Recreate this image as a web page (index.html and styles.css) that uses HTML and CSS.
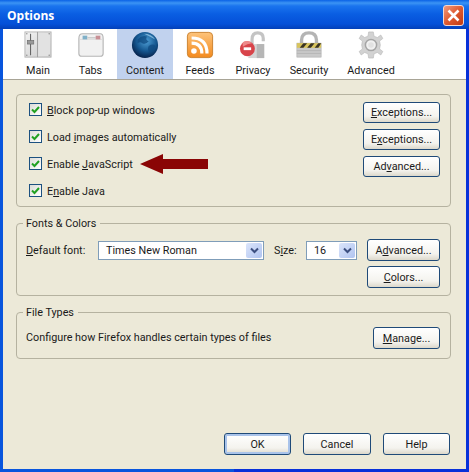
FILE: index.html
```html
<!DOCTYPE html>
<html lang="en">
<head>
<meta charset="utf-8">
<title>Options</title>
<link rel="stylesheet" href="styles.css">
</head>
<body>
<div class="window">
  <header class="titlebar">
    <span class="title">Options</span>
    <span class="close">
      <svg viewBox="0 0 13 13" width="13" height="13"><path d="M1.5 1.5 L11.5 11.5 M11.5 1.5 L1.5 11.5" stroke="#fff" stroke-width="2.6" fill="none"/></svg>
    </span>
  </header>
  <div class="client">
    <nav class="toolbar">
      <div class="tab">
        <svg class="icon" viewBox="0 0 30 30"><defs><linearGradient id="m1" x1="0" x2="1" y1="0" y2="1"><stop offset="0" stop-color="#f4f4f4"/><stop offset="1" stop-color="#c8c8c8"/></linearGradient></defs><rect x="1" y="1" width="28" height="27" fill="url(#m1)" stroke="#b4b4b4"/><rect x="15" y="2" width="13" height="25" fill="#e2e2e2"/><path d="M14.5 1V28" stroke="#9c9c9c"/><path d="M7 3V26" stroke="#666" stroke-width="1.2"/><rect x="3.5" y="10" width="7" height="4" fill="#9a9a9a" stroke="#666" stroke-width=".6"/><g fill="#8f8f8f"><circle cx="3" cy="3" r=".8"/><circle cx="27" cy="3" r=".8"/><circle cx="3" cy="26" r=".8"/><circle cx="27" cy="26" r=".8"/></g></svg>
        <span>Main</span>
      </div>
      <div class="tab">
        <svg class="icon" viewBox="0 0 30 30"><path d="M2 8 Q2 3 6 3 H25 Q28 3 28 8 V24 Q28 27 25 27 H5 Q2 27 2 24Z" fill="#f1f1f1" stroke="#b5b5b5" stroke-width="1.2"/><path d="M3 9H27" stroke="#dcdcdc"/><rect x="6" y="5" width="5" height="4" fill="#7fb0c8"/><rect x="11" y="6.5" width="9" height="1.5" fill="#c9c9c9"/><rect x="20" y="5" width="5" height="4" fill="#c88f95"/></svg>
        <span>Tabs</span>
      </div>
      <div class="tab tab-active">
        <svg class="icon" viewBox="0 0 30 30"><defs><radialGradient id="g1" cx=".55" cy=".35" r=".7"><stop offset="0" stop-color="#4f9fd6"/><stop offset=".55" stop-color="#14568f"/><stop offset="1" stop-color="#04193f"/></radialGradient></defs><circle cx="15" cy="15" r="14" fill="url(#g1)"/><path d="M7 9 Q12 4 17 6 Q15 10 19 11 Q16 15 12 13 Q10 11 7 13Z M19 16 Q24 13 26 16 Q24 22 20 23 Q17 20 19 16Z" fill="#0f4a80" opacity=".75"/><path d="M14 3 Q22 3 26 9 Q20 6 14 3Z" fill="#9fd0ee" opacity=".7"/></svg>
        <span>Content</span>
      </div>
      <div class="tab">
        <svg class="icon" viewBox="0 0 30 30"><defs><linearGradient id="f1" x1="0" x2="0" y1="0" y2="1"><stop offset="0" stop-color="#fdc37a"/><stop offset="1" stop-color="#f38a1e"/></linearGradient></defs><rect x="1.5" y="1.5" width="27" height="27" rx="4" fill="url(#f1)" stroke="#c9802c"/><circle cx="8.5" cy="21.5" r="3" fill="#fff"/><path d="M6 13 Q17 13 17 24 M6 7.5 Q22.5 7.5 22.5 24" fill="none" stroke="#fff" stroke-width="3.4"/></svg>
        <span>Feeds</span>
      </div>
      <div class="tab">
        <svg class="icon" viewBox="0 0 30 30"><path d="M14 15V9 Q14 2 20 2 Q26 2 26 8 V11" fill="none" stroke="#c4c4c4" stroke-width="3.4"/><rect x="10" y="14" width="17" height="15" fill="#d4d4d4"/><rect x="19" y="14" width="8" height="15" fill="#b6b6b6"/><circle cx="9" cy="19" r="8" fill="#d8444a"/><path d="M4 12 Q9 9 14 13 Q9 13 4 17Z" fill="#ee8a8a"/><rect x="5" y="17.5" width="8" height="3" fill="#fff"/></svg>
        <span>Privacy</span>
      </div>
      <div class="tab">
        <svg class="icon" viewBox="0 0 30 30"><path d="M7 14V10 Q7 2 15 2 Q23 2 23 10 V14" fill="none" stroke="#b4b4b4" stroke-width="3.6"/><rect x="2" y="13" width="26" height="15" fill="#c9c9c9" stroke="#aaa" stroke-width=".6"/><rect x="2" y="13" width="26" height="5" fill="#d8c45c"/><path d="M5 18 L9 13 H13 L9 18Z M13 18 L17 13 H21 L17 18Z M21 18 L25 13 H28 L25 18Z" fill="#3a3426"/><path d="M2 21H28 M2 24H28" stroke="#b5b5b5"/></svg>
        <span>Security</span>
      </div>
      <div class="tab">
        <svg class="icon" viewBox="0 0 30 30"><g fill="#d2d2d2" stroke="#b4b4b4" stroke-width=".6"><path d="M12.5 1H17.5L18.2 5.5L21.8 7L25.5 4.3L27.7 8L24.2 10.8L25 15L24.2 19.2L27.7 22L25.5 25.7L21.8 23L18.2 24.5L17.5 29H12.5L11.8 24.5L8.2 23L4.5 25.7L2.3 22L5.8 19.2L5 15L5.8 10.8L2.3 8L4.5 4.3L8.2 7L11.8 5.5Z"/></g><circle cx="15" cy="15" r="6" fill="#f1f1f1" stroke="#a5a5a5" stroke-width="1.6"/><circle cx="15" cy="15" r="3" fill="#e2e2e2"/></svg>
        <span>Advanced</span>
      </div>
    </nav>
    <main class="panel">
      <section class="group group-content">
        <div class="checks">
          <label class="check"><span class="box"><svg viewBox="0 0 13 13" width="13" height="13"><path d="M3 6.5 L5.5 9 L10 4" fill="none" stroke="#21a121" stroke-width="2"/></svg></span><span class="check-text"><u>B</u>lock pop-up windows</span></label>
          <label class="check"><span class="box"><svg viewBox="0 0 13 13" width="13" height="13"><path d="M3 6.5 L5.5 9 L10 4" fill="none" stroke="#21a121" stroke-width="2"/></svg></span><span class="check-text">Load <u>i</u>mages automatically</span></label>
          <label class="check"><span class="box"><svg viewBox="0 0 13 13" width="13" height="13"><path d="M3 6.5 L5.5 9 L10 4" fill="none" stroke="#21a121" stroke-width="2"/></svg></span><span class="check-text">Enable <u>J</u>avaScript</span></label>
          <label class="check"><span class="box"><svg viewBox="0 0 13 13" width="13" height="13"><path d="M3 6.5 L5.5 9 L10 4" fill="none" stroke="#21a121" stroke-width="2"/></svg></span><span class="check-text">E<u>n</u>able Java</span></label>
        </div>
        <div class="btn-col btn-col-content">
          <button class="btn btn-exc"><u>E</u>xceptions...</button>
          <button class="btn btn-exc">E<u>x</u>ceptions...</button>
          <button class="btn btn-exc">Ad<u>v</u>anced...</button>
        </div>
        <svg class="arrow" viewBox="0 0 68 20" width="68" height="20"><path d="M0 10 L23 0 V5 H68 V15 H23 V20Z" fill="#8a0505"/></svg>
      </section>
      <section class="group group-fonts">
        <span class="legend">Fonts &amp; Colors</span>
        <div class="fonts-row">
          <span class="lbl lbl-font"><u>D</u>efault font:</span>
          <span class="select sel-font"><span>Times New Roman</span><span class="drop"><svg viewBox="0 0 9 7" width="9" height="7"><path d="M1 1.5 L4.5 5 L8 1.5" fill="none" stroke="#3c4f80" stroke-width="2"/></svg></span></span>
          <span class="lbl lbl-size">S<u>i</u>ze:</span>
          <span class="select sel-size"><span>16</span><span class="drop"><svg viewBox="0 0 9 7" width="9" height="7"><path d="M1 1.5 L4.5 5 L8 1.5" fill="none" stroke="#3c4f80" stroke-width="2"/></svg></span></span>
          <div class="btn-col btn-col-fonts">
            <button class="btn btn-adv">A<u>d</u>vanced...</button>
            <button class="btn btn-adv"><u>C</u>olors...</button>
          </div>
        </div>
      </section>
      <section class="group group-files">
        <span class="legend">File Types</span>
        <span>Configure how Firefox handles certain types of files</span>
        <button class="btn btn-man"><u>M</u>anage...</button>
      </section>
    </main>
    <footer class="actions">
      <button class="btn btn-foot btn-default">OK</button>
      <button class="btn btn-foot btn-cancel">Cancel</button>
      <button class="btn btn-foot">Help</button>
    </footer>
  </div>
</div>
</body>
</html>
```
FILE: styles.css
```css
* { box-sizing: border-box; }
html, body { margin: 0; padding: 0; }
body {
  width: 469px;
  height: 472px;
  overflow: hidden;
  font-family: Roboto, "Noto Sans", sans-serif;
  font-size: 10.8px;
  color: #1a1a1a;
}
.window {
  width: 469px;
  height: 472px;
  display: flex;
  flex-direction: column;
  background: linear-gradient(90deg, #0855dd 0, #0855dd 50%, #0831d9 50%, #0831d9 100%);
  padding: 0 3px 3px;
}
.titlebar {
  height: 29px;
  margin: 0 -3px;
  padding: 1px 5px 0 7px;
  display: flex;
  align-items: center;
  justify-content: space-between;
  background: linear-gradient(180deg, #0a62e6 0, #3c94f4 3px, #1a74ee 6px, #0a5ee2 14px, #0550d8 24px, #0340b8 29px);
}
.title {
  font-family: "Open Sans", sans-serif;
  font-weight: 700;
  font-size: 12px;
  color: #fff;
}
.close {
  width: 21px;
  height: 21px;
  border: 1px solid #f3d8cf;
  border-radius: 3px;
  display: flex;
  align-items: center;
  justify-content: center;
  background: linear-gradient(135deg, #f09a7e 0, #de5a30 50%, #c23a10 100%);
}
.client {
  flex: 1;
  display: flex;
  flex-direction: column;
  background: #ece9d8;
}
.toolbar {
  height: 51px;
  background: #fff;
  border-bottom: 1px solid #a8a496;
  display: grid;
  grid-template-columns: 52px 53px 56px 54px 52px 60px 64px;
  padding-left: 9px;
}
.tab {
  display: flex;
  flex-direction: column;
  align-items: center;
  padding-top: 2px;
  line-height: 15px;
  white-space: nowrap;
}
.tab-active { background: #c1d2ee; }
.icon { width: 28px; height: 28px; margin-bottom: 4px; flex: none; }
.panel {
  flex: 1;
  padding: 14px 15px 0 13px;
  display: flex;
  flex-direction: column;
  gap: 16px;
}
.group {
  position: relative;
  border: 1px solid #b5b2a0;
  border-radius: 4px;
  display: flex;
  justify-content: space-between;
}
.group-content { height: 113px; padding: 4px 10px 0 12px; }
.group-fonts { height: 73px; padding: 15px 10px 0 9px; }
.group-files { height: 47px; padding: 15px 10px 0 9px; }
.legend {
  position: absolute;
  left: 6px;
  top: -8px;
  padding: 0 4px 0 3px;
  line-height: 15px;
  background: #ece9d8;
}
.checks { display: flex; flex-direction: column; gap: 6px; }
.check { display: flex; align-items: center; gap: 5px; height: 21px; }
.check-text { padding-top: 2px; }
.box {
  width: 13px;
  height: 13px;
  border: 1px solid #1c5180;
  background: linear-gradient(135deg, #dcdcd7, #fff);
  display: flex;
  align-items: center;
  justify-content: center;
}
.box svg { flex: none; }
.btn-col { display: flex; flex-direction: column; gap: 5px; }
.btn-col-content { gap: 6px; padding-top: 3px; }
.btn {
  font: inherit;
  color: inherit;
  padding: 0;
  height: 22px;
  border: 1px solid #1f4a78;
  border-radius: 3px;
  background: linear-gradient(180deg, #fff 0, #f4f3ee 70%, #dcd8cb 100%);
  white-space: nowrap;
}
.btn-exc { width: 77px; height: 21px; }
.btn-adv { width: 73px; }
.btn-man { width: 67px; margin-top: -1px; }
.arrow { position: absolute; left: 123px; top: 59px; }
.fonts-row { display: flex; align-items: flex-start; width: 100%; }
.lbl { line-height: 19px; padding-top: 2px; }
.lbl-font { width: 72px; flex: none; }
.lbl-size { margin-left: 10px; width: 32px; flex: none; }
.select {
  height: 19px;
  margin-top: 2px;
  border: 1px solid #7f9db9;
  background: #fff;
  display: flex;
  align-items: center;
  justify-content: space-between;
  padding: 1px 1px 1px 7px;
}
.sel-font { width: 166px; }
.sel-size { width: 51px; }
.drop {
  width: 16px;
  height: 15px;
  border-radius: 2px;
  background: linear-gradient(135deg, #dbe5fb, #b0c4f0);
  display: flex;
  align-items: center;
  justify-content: center;
}
.btn-col-fonts { margin-left: auto; }
.group-files > span:not(.legend) { line-height: 19px; }
.actions {
  height: 36px;
  display: flex;
  gap: 12px;
  justify-content: flex-end;
  padding-right: 16px;
}
.btn-foot { width: 67px; }
.btn-cancel { width: 68px; }
.btn-default { box-shadow: inset 0 0 0 2px #a9c3ea; }
```
